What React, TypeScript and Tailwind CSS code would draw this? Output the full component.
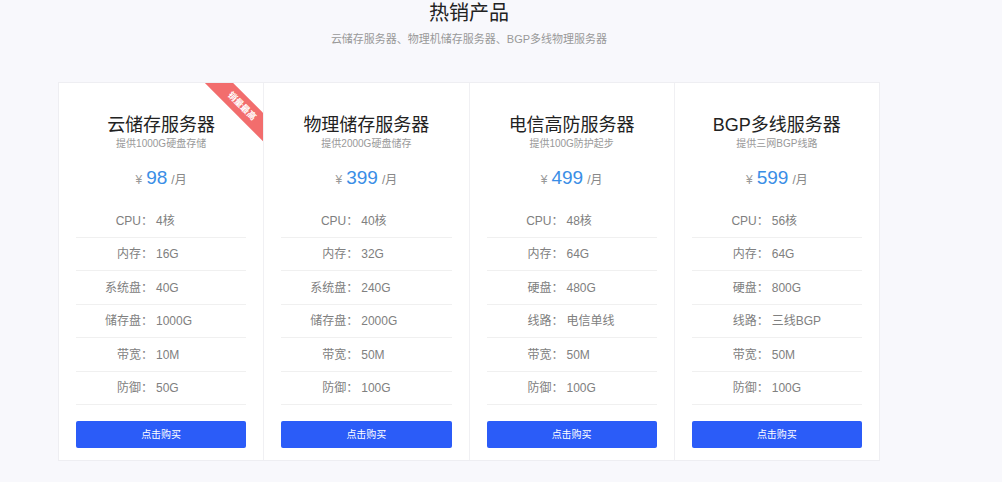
import React from 'react';

type Spec = [string, string];

interface Product {
  name: string;
  desc: string;
  price: string;
  specs: Spec[];
  hot?: boolean;
}

const products: Product[] = [
  {
    name: '云储存服务器',
    desc: '提供1000G硬盘存储',
    price: '98',
    hot: true,
    specs: [
      ['CPU：', '4核'],
      ['内存：', '16G'],
      ['系统盘：', '40G'],
      ['储存盘：', '1000G'],
      ['带宽：', '10M'],
      ['防御：', '50G'],
    ],
  },
  {
    name: '物理储存服务器',
    desc: '提供2000G硬盘储存',
    price: '399',
    specs: [
      ['CPU：', '40核'],
      ['内存：', '32G'],
      ['系统盘：', '240G'],
      ['储存盘：', '2000G'],
      ['带宽：', '50M'],
      ['防御：', '100G'],
    ],
  },
  {
    name: '电信高防服务器',
    desc: '提供100G防护起步',
    price: '499',
    specs: [
      ['CPU：', '48核'],
      ['内存：', '64G'],
      ['硬盘：', '480G'],
      ['线路：', '电信单线'],
      ['带宽：', '50M'],
      ['防御：', '100G'],
    ],
  },
  {
    name: 'BGP多线服务器',
    desc: '提供三网BGP线路',
    price: '599',
    specs: [
      ['CPU：', '56核'],
      ['内存：', '64G'],
      ['硬盘：', '800G'],
      ['线路：', '三线BGP'],
      ['带宽：', '50M'],
      ['防御：', '100G'],
    ],
  },
];

function ProductCard({ p, last }: { p: Product; last: boolean }) {
  return (
    <div
      className={
        'relative overflow-hidden flex-1 flex flex-col items-center px-[17px] pt-[30px] pb-[12px] ' +
        (last ? '' : 'border-r border-[#f0f0f3]')
      }
    >
      {p.hot && (
        <div className="absolute left-[131px] top-[13px] w-[104px] h-[20px] rotate-45 bg-[#f26d6d] text-white text-[9px] leading-[20px] text-center font-bold">
          销量最高
        </div>
      )}
      <div className="h-[24px] leading-[24px] text-[18px] text-[#222]">{p.name}</div>
      <div className="h-[14px] leading-[14px] text-[10px] text-[#999]">{p.desc}</div>
      <div className="mt-[13px] h-[28px] flex items-baseline">
        <span className="text-[12px] text-[#999] mr-[4px]">¥</span>
        <span className="text-[19px] leading-[28px] text-[#3a8ee6]">{p.price}</span>
        <span className="text-[12px] text-[#888] ml-[4px]">/月</span>
      </div>
      <div className="mt-[12px] w-full">
        {p.specs.map(([k, v]) => (
          <div key={k} className="h-[33.5px] pt-[1px] flex items-center border-b border-[#f0f0f0] text-[12px] text-[#808080]">
            <span className="w-[77px] text-right">{k}</span>
            <span className="ml-[3px]">{v}</span>
          </div>
        ))}
      </div>
      <button className="mt-[16px] w-full h-[27px] rounded-[2px] bg-[#2b5cf8] text-white text-[10px]">
        点击购买
      </button>
    </div>
  );
}

export default function App() {
  return (
    <div
      className="w-[1002px] h-[482px] bg-[#f8f8fc] overflow-hidden"
      style={{ fontFamily: '"Liberation Sans", "Noto Sans CJK SC", sans-serif' }}
    >
      <div className="ml-[58px] w-[822px]">
        <div className="pt-[1px] h-[27px] leading-[24px] text-center text-[20px] text-[#222]">热销产品</div>
        <div className="mt-[4px] h-[16px] leading-[16px] text-center text-[11px] text-[#999]">
          云储存服务器、物理机储存服务器、BGP多线物理服务器
        </div>
        <div className="mt-[35px] flex bg-white border border-[#eeeef2]">
          {products.map((p, i) => (
            <ProductCard key={p.name} p={p} last={i === products.length - 1} />
          ))}
        </div>
      </div>
    </div>
  );
}
